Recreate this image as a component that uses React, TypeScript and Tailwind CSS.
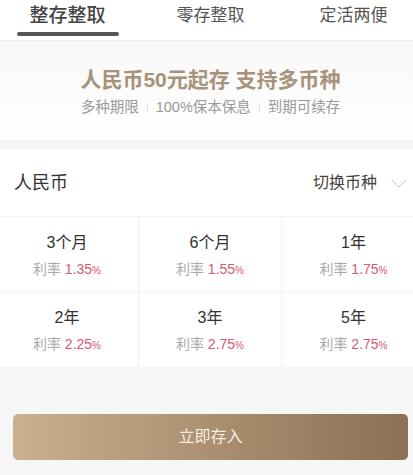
// Fixed deposit product page: tab bar, promo banner, currency rate grid, CTA.

const rates = [
  { term: '3个月', rate: '1.35' },
  { term: '6个月', rate: '1.55' },
  { term: '1年', rate: '1.75' },
  { term: '2年', rate: '2.25' },
  { term: '3年', rate: '2.75' },
  { term: '5年', rate: '2.75' },
]

function Sep() {
  return <span className="mx-[8px] inline-block h-[9px] w-px bg-[#e2e2e2]" aria-hidden="true" />
}

export default function App() {
  return (
    <div
      className="h-[475px] w-[413px] overflow-hidden bg-[#f6f6f6]"
      style={{ fontFamily: '"Liberation Sans", "Noto Sans CJK SC", sans-serif' }}
    >
      <div className="-ml-1 w-[429px]">
        {/* Tabs */}
        <div className="flex h-[41px] items-start border-b border-[#eeeeee] bg-white">
          <div className="relative flex h-full w-[143px] justify-center pt-[3px]">
            <span className="text-[19px] font-medium leading-[26px] text-[#444]">整存整取</span>
            <span className="absolute bottom-[4px] left-[21px] h-[4px] w-[102px] rounded-full bg-[#555]" />
          </div>
          <div className="flex w-[143px] justify-center pt-[4px]">
            <span className="text-[17px] leading-[24px] text-[#555]">零存整取</span>
          </div>
          <div className="flex w-[143px] justify-center pt-[4px]">
            <span className="text-[17px] leading-[24px] text-[#555]">定活两便</span>
          </div>
        </div>

        {/* Banner */}
        <div className="flex h-[99px] flex-col items-center bg-gradient-to-b from-[#f8f8f8] to-white pt-[25px]">
          <p className="text-[21px] font-bold leading-[28px] text-[#a8937a]">人民币50元起存 支持多币种</p>
          <p className="mt-[3px] flex items-center text-[14.5px] leading-[20px] text-[#9a9a9a]">
            <span>多种期限</span>
            <Sep />
            <span>100%保本保息</span>
            <Sep />
            <span>到期可续存</span>
          </p>
        </div>

        {/* Rate card */}
        <div className="mt-[10px] bg-white">
          <div className="flex h-[66px] items-center justify-between px-[18px]">
            <span className="text-[18px] text-[#333]">人民币</span>
            <div className="flex items-center gap-[14px]">
              <span className="text-[16px] text-[#444]">切换币种</span>
              <svg width="16" height="9" viewBox="0 0 16 9" fill="none" aria-hidden="true">
                <polyline points="0.5,0.5 8,8 15.5,0.5" stroke="#c8c8c8" strokeWidth="1" />
              </svg>
            </div>
          </div>
          <div className="grid grid-cols-3 border-t border-[#f2f2f2]">
            {rates.map((r, i) => (
              <div
                key={r.term}
                className={[
                  'flex flex-col items-center justify-center gap-[5px] pt-[3px]',
                  i < 3 ? 'h-[76px] border-b border-[#f2f2f2]' : 'h-[74px]',
                  i % 3 !== 2 ? 'border-r border-[#f2f2f2]' : '',
                ].join(' ')}
              >
                <span className="text-[16px] leading-[22px] text-[#333]">{r.term}</span>
                <span className="text-[14px] leading-[20px] text-[#aaa]">
                  利率 <span className="text-[#d45a6e]">{r.rate}</span>
                  <span className="text-[10px] text-[#d45a6e]">%</span>
                </span>
              </div>
            ))}
          </div>
        </div>

        {/* CTA */}
        <div className="px-[17px] pt-[47px]">
          <button
            type="button"
            className="flex h-[46px] w-full items-center justify-center rounded-[5px] bg-gradient-to-r from-[#cbb08f] to-[#8b7054] text-[16px] text-[#f6ede2]"
          >
            立即存入
          </button>
        </div>
      </div>
    </div>
  )
}
